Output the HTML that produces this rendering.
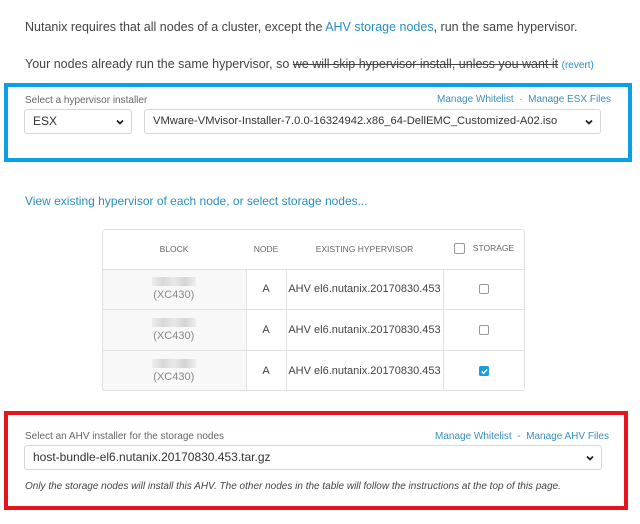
<!DOCTYPE html>
<html><head><style>
*{box-sizing:border-box;margin:0;padding:0}
body{width:640px;height:524px;background:#fff;font-family:"Liberation Sans",sans-serif;color:#444;position:relative;overflow:hidden}
.a{position:absolute;white-space:nowrap}
.link{color:#2a8fc4}
.box{position:absolute;background:#fff}
.sel{position:absolute;border:1px solid #d6d6d6;border-radius:3px;background:#fff;font-size:12px;color:#333;padding-left:8px;line-height:23px;overflow:hidden;white-space:nowrap}
.chev{position:absolute;right:7px;top:8px;width:8px;height:8px}
.lbl{font-size:10px;color:#666}
.ml{font-size:10px;color:#3a8fc2}
table{position:absolute;left:102px;top:229px;width:423px;border-collapse:collapse;font-size:11px;table-layout:fixed}
td,th{border:1px solid #e2e2e2;text-align:center}
th{font-weight:normal;font-size:8.5px;color:#666;height:40px;border-left:none;border-right:none;border-top:none}
td{height:40.5px;color:#444;background:#fff}
.cb{display:inline-block;width:10px;height:10px;border:1px solid #999;border-radius:2px;vertical-align:middle}
.blur{display:block;margin:0 auto 3px;width:44px;height:9px;background:linear-gradient(90deg,#eee,#d8d8d8,#e8e8e8,#d4d4d4,#eee)}
.bl{background:#f8f8f8;border-left:none}
</style></head><body>
<div class="a" style="left:25px;top:20px;font-size:12.5px">Nutanix requires that all nodes of a cluster, except the <span class="link">AHV storage nodes</span>, run the same hypervisor.</div>
<div class="a" style="left:25px;top:57px;font-size:12.5px">Your nodes already run the same hypervisor, so <s>we will skip hypervisor install, unless you want it</s> <span class="link" style="font-size:10px">(revert)</span></div>

<div class="box" style="left:4px;top:83px;width:628px;height:79px;border:4px solid #0aa0e4"></div>
<div class="a lbl" style="left:25px;top:95px">Select a hypervisor installer</div>
<div class="a ml" style="left:437px;top:94px">Manage Whitelist &nbsp;·&nbsp; Manage ESX Files</div>
<div class="sel" style="left:24px;top:109px;width:108px;height:25px">ESX<svg class="chev" viewBox="0 0 8 8"><path d="M1 2.5 L4 5.5 L7 2.5" stroke="#222" stroke-width="1.8" fill="none"/></svg></div>
<div class="sel" style="left:144px;top:109px;width:457px;height:25px;font-size:11.2px">VMware-VMvisor-Installer-7.0.0-16324942.x86_64-DellEMC_Customized-A02.iso<svg class="chev" viewBox="0 0 8 8"><path d="M1 2.5 L4 5.5 L7 2.5" stroke="#222" stroke-width="1.8" fill="none"/></svg></div>

<div class="a link" style="left:25px;top:194px;font-size:12px">View existing hypervisor of each node, or select storage nodes...</div>

<table>
<colgroup><col style="width:144px"><col style="width:40px"><col style="width:157px"><col style="width:82px"></colgroup>
<tr><th>BLOCK</th><th>NODE</th><th>EXISTING HYPERVISOR</th><th><span class="cb" style="width:11px;height:11px;margin-right:8px"></span>STORAGE</th></tr>
<tr><td class="bl"><span class="blur"></span><span style="color:#888">(XC430)</span></td><td>A</td><td>AHV el6.nutanix.20170830.453</td><td style="border-right:none"><span class="cb"></span></td></tr>
<tr><td class="bl"><span class="blur"></span><span style="color:#888">(XC430)</span></td><td>A</td><td>AHV el6.nutanix.20170830.453</td><td style="border-right:none"><span class="cb"></span></td></tr>
<tr><td class="bl" style="border-bottom:none"><span class="blur"></span><span style="color:#888">(XC430)</span></td><td style="border-bottom:none">A</td><td style="border-bottom:none">AHV el6.nutanix.20170830.453</td><td style="border-right:none;border-bottom:none"><span class="cb" style="background:#1a9ee0;border-color:#1a9ee0;position:relative"><svg viewBox="0 0 10 10" style="position:absolute;left:0;top:0;width:9px;height:9px"><path d="M2 5 L4 7 L8 2.5" stroke="#fff" stroke-width="1.6" fill="none"/></svg></span></td></tr>
</table>
<div class="box" style="left:102px;top:229px;width:423px;height:162px;border:1px solid #e2e2e2;border-radius:3px;background:transparent"></div>

<div class="box" style="left:4px;top:411px;width:624px;height:99px;border:4px solid #e8141c"></div>
<div class="a lbl" style="left:25px;top:431px">Select an AHV installer for the storage nodes</div>
<div class="a ml" style="left:435px;top:431px">Manage Whitelist &nbsp;-&nbsp; Manage AHV Files</div>
<div class="sel" style="left:24px;top:445px;width:578px;height:25px">host-bundle-el6.nutanix.20170830.453.tar.gz<svg class="chev" viewBox="0 0 8 8"><path d="M1 2.5 L4 5.5 L7 2.5" stroke="#222" stroke-width="1.8" fill="none"/></svg></div>
<div class="a" style="left:25px;top:481px;font-size:10px;font-style:italic;color:#444">Only the storage nodes will install this AHV. The other nodes in the table will follow the instructions at the top of this page.</div>
</body></html>
